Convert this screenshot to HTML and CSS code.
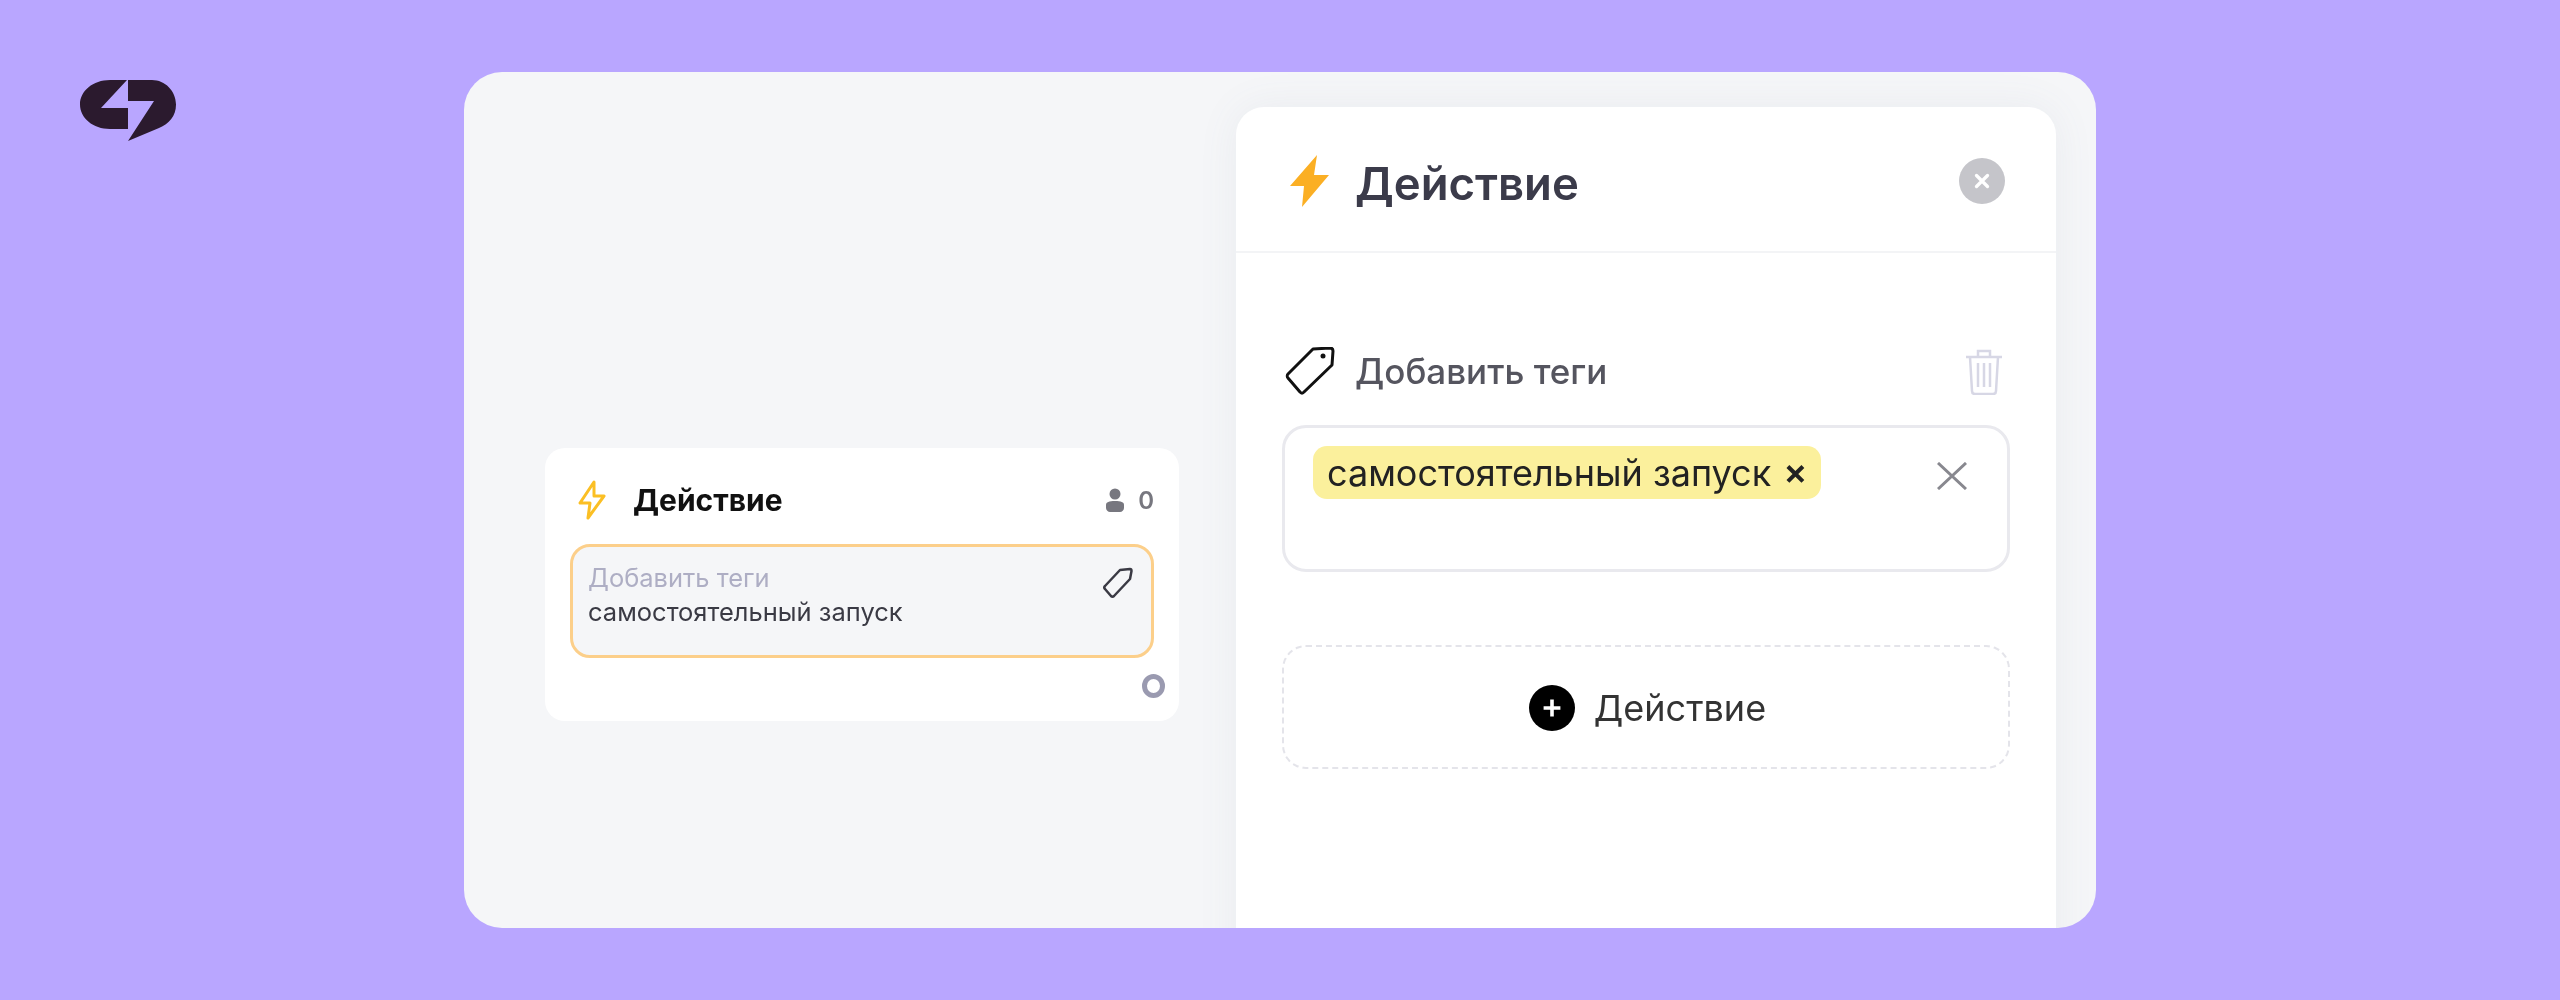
FILE: index.html
```html
<!DOCTYPE html>
<html>
<head>
    <title>Действие</title>
    <link rel="stylesheet" href="styles.css">
</head>
<body>
    <div class="page">
        <svg class="logo" viewBox="0 0 96 61">
            <path d="M47 0H30C13 0 0 11 0 24.500C0 38 13 49 30 49H48V28H21Z" fill="#2b1a2e"/>
            <path d="M48 0H72C85 0 96 11 96 24.500C96 36 89 44 79 48L48 61L74 21H48Z" fill="#2b1a2e"/>
        </svg>

        <div class="frame">
            <div class="node">
                <div class="node-head">
                    <svg class="node-bolt" viewBox="0 0 30 40">
                        <path d="M17 2L3 23H13L11 38L27 16H17Z" fill="none" stroke="#fbbf24" stroke-width="3" stroke-linejoin="round"/>
                    </svg>
                    <span class="node-title">Действие</span>
                    <svg class="node-user" viewBox="0 0 20 24">
                        <circle cx="10" cy="6" r="5.500" fill="#77777f"/>
                        <path d="M1 17C1 14 4 13 10 13S19 14 19 17V20C19 22 17 24 15 24H5C3 24 1 22 1 20Z" fill="#77777f"/>
                    </svg>
                    <span class="node-count">0</span>
                </div>
                <div class="node-box">
                    <div class="node-text">
                        <div class="node-label">Добавить теги</div>
                        <div class="node-value">самостоятельный запуск</div>
                    </div>
                    <svg class="node-tag" viewBox="0 0 30 32">
                        <path d="M17 3L27 2C28 2 28.500 3 28.500 4L27 12L11 29C10 30 9 30 8 29L2 22C1 21 1 20 2 19Z" fill="none" stroke="#3a3a44" stroke-width="2.500" stroke-linejoin="round"/>
                    </svg>
                </div>
                <div class="node-foot"><span class="node-port"></span></div>
            </div>

            <div class="panel">
                <div class="panel-head">
                    <svg class="panel-bolt" viewBox="0 0 39 52">
                        <path d="M27 0L0 31H14L12 52L39 20H24Z" fill="#fbaf24"/>
                    </svg>
                    <span class="panel-title">Действие</span>
                    <span class="close-btn">
                        <svg viewBox="0 0 20 20"><path d="M5 5L15 15M15 5L5 15" stroke="#fff" stroke-width="3" stroke-linecap="round"/></svg>
                    </span>
                </div>
                <div class="panel-body">
                    <div class="field-head">
                        <svg class="field-tag" viewBox="0 0 50 48">
                            <path d="M28 2L45 1C47 1 48 2 48 4L47 18L19 45C18 46.500 16 46.500 15 45L3 31C2 30 2 28 3 27Z" fill="none" stroke="#111" stroke-width="3" stroke-linejoin="round"/>
                            <circle cx="38" cy="9" r="2.500" fill="#111"/>
                        </svg>
                        <span class="field-label">Добавить теги</span>
                        <svg class="field-trash" viewBox="0 0 38 46">
                            <path d="M1 8H37M13 8V2H25V8M5 8L7 42C7 44 8 45 10 45H28C30 45 31 44 31 42L33 8M13 14V38M19 14V38M25 14V38" fill="none" stroke="#d7d7e5" stroke-width="2.500"/>
                        </svg>
                    </div>
                    <div class="tag-input">
                        <span class="chip">самостоятельный запуск <span class="chip-x">×</span></span>
                        <svg class="clear-x" viewBox="0 0 30 28"><path d="M1 1L29 27M29 1L1 27" stroke="#88888f" stroke-width="3"/></svg>
                    </div>
                    <div class="add-action">
                        <span class="add-icon">
                            <svg viewBox="0 0 20 20"><path d="M10 3V17M3 10H17" stroke="#fff" stroke-width="3"/></svg>
                        </span>
                        <span class="add-text">Действие</span>
                    </div>
                </div>
            </div>
        </div>
    </div>
</body>
</html>
```

FILE: styles.css
```css
* {
    box-sizing: border-box;
    margin: 0;
    padding: 0;
}

body {
    font-family: Inter, 'Noto Sans', sans-serif;
    background-color: #b9a6ff;
    height: 1000px;
    overflow: hidden;
}

.page {
    display: flex;
    align-items: flex-start;
    gap: 288px;
    padding: 72px 0 0 80px;
}

.logo {
    width: 96px;
    height: 61px;
    margin-top: 8px;
    flex: none;
}

.frame {
    display: flex;
    align-items: flex-start;
    gap: 57px;
    width: 1632px;
    height: 856px;
    padding: 35px 0 0 81px;
    background: #f5f6f8;
    border-radius: 38px;
    overflow: hidden;
}

/* the screenshot is an upscaled one, so its contents are a bit soft */
.node-head,
.node-box,
.node-foot,
.panel-head > *,
.field-head,
.chip,
.clear-x,
.add-icon,
.add-text {
    filter: blur(0.6px);
}

/* node on the canvas */
.node {
    width: 634px;
    height: 273px;
    margin-top: 341px;
    padding: 32px 25px 0 25px;
    background: white;
    border-radius: 20px;
    flex: none;
}

.node-head {
    display: flex;
    align-items: center;
    height: 40px;
    margin-bottom: 24px;
    padding-left: 7px;
}

.node-bolt {
    width: 30px;
    height: 40px;
    margin-right: 26px;
}

.node-title {
    flex: 1;
    font-size: 30px;
    font-weight: 700;
    color: #111;
}

.node-user {
    width: 20px;
    height: 24px;
    margin-right: 13px;
}

.node-count {
    font-size: 24px;
    font-weight: 600;
    color: #77777f;
}

.node-box {
    display: flex;
    justify-content: space-between;
    height: 114px;
    padding: 15px 18px 0 15px;
    background: #f5f6f8;
    border: 3px solid #fccf8a;
    border-radius: 20px;
}

.node-label {
    font-size: 25.500px;
    line-height: 32px;
    color: #aeaec4;
}

.node-value {
    font-size: 25.500px;
    line-height: 36px;
    color: #3a3a44;
}

.node-tag {
    width: 30px;
    height: 32px;
    margin-top: 5px;
}

.node-foot {
    display: flex;
    justify-content: flex-end;
    margin: 16px -11px 0 0;
}

.node-port {
    width: 23px;
    height: 24px;
    border: 5px solid #9a9ab0;
    border-radius: 50%;
}

/* side panel */
.panel {
    width: 820px;
    height: 900px;
    background: white;
    border-radius: 28px;
    box-shadow: 0 0 40px rgba(100, 110, 140, 0.08);
    flex: none;
}

.panel-head {
    display: flex;
    align-items: center;
    height: 146px;
    padding: 8px 51px 0 54px;
    border-bottom: 2px solid #f3f4f6;
}

.panel-bolt {
    width: 39px;
    height: 52px;
    margin: -4px 26px 0 0;
}

.panel-title {
    flex: 1;
    font-size: 45.500px;
    font-weight: 600;
    color: #3b3b4a;
}

.close-btn {
    display: flex;
    align-items: center;
    justify-content: center;
    width: 46px;
    height: 46px;
    margin-top: -5px;
    background: #c5c5ca;
    border-radius: 50%;
}

.close-btn svg {
    width: 22px;
    height: 22px;
}

.panel-body {
    padding: 94px 46px 0 46px;
}

.field-head {
    display: flex;
    align-items: center;
    height: 48px;
    margin-bottom: 30px;
    padding-left: 3px;
}

.field-tag {
    width: 50px;
    height: 48px;
    margin-right: 20px;
}

.field-label {
    flex: 1;
    font-size: 35px;
    font-weight: 500;
    color: #55555f;
}

.field-trash {
    width: 38px;
    height: 46px;
    margin: 2px 7px 0 0;
}

.tag-input {
    display: flex;
    justify-content: space-between;
    align-items: flex-start;
    height: 147px;
    padding: 18px 40px 0 28px;
    border: 3px solid #e9e9ee;
    border-radius: 24px;
}

.chip {
    display: flex;
    align-items: center;
    gap: 12px;
    height: 53px;
    padding: 0 14px;
    background: #fbf09c;
    border-radius: 14px;
    font-size: 36px;
    color: #222;
}

.chip-x {
    font-size: 36px;
    font-weight: 600;
    line-height: 1;
    margin-top: -4px;
}

.clear-x {
    width: 30px;
    height: 28px;
    margin-top: 16px;
}

.add-action {
    display: flex;
    align-items: center;
    justify-content: center;
    gap: 19px;
    height: 124px;
    margin-top: 73px;
    padding: 2px 0 0 3px;
    border: 2px dashed #e4e4ea;
    border-radius: 24px;
}

.add-icon {
    display: flex;
    align-items: center;
    justify-content: center;
    width: 46px;
    height: 46px;
    background: black;
    border-radius: 50%;
}

.add-icon svg {
    width: 24px;
    height: 24px;
}

.add-text {
    font-size: 36px;
    color: #333;
}
```
